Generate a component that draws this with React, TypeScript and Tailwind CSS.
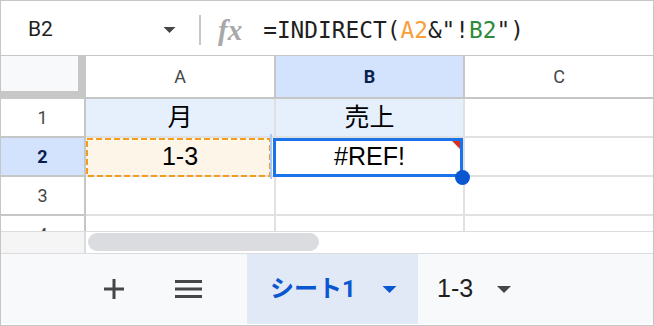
import type { ReactNode } from "react";

const cols = [
  { key: "A", width: "w-[190px]", active: false },
  { key: "B", width: "w-[189px]", active: true },
  { key: "C", width: "flex-1", active: false },
];

const rows: { n: number; cells: ReactNode[]; tint: string[] }[] = [
  { n: 1, cells: ["月", "売上", ""], tint: ["bg-[#e6f0fd]", "bg-[#e6f0fd]", "bg-white"] },
  { n: 2, cells: ["1-3", "#REF!", ""], tint: ["bg-[#fdf5e8]", "bg-white", "bg-white"] },
  { n: 3, cells: ["", "", ""], tint: ["bg-white", "bg-white", "bg-white"] },
  { n: 4, cells: ["", "", ""], tint: ["bg-white", "bg-white", "bg-white"] },
];

function Caret({ className }: { className: string }) {
  return (
    <svg viewBox="0 0 14 7" className={className}>
      <path d="M0 0h14L7 7z" fill="currentColor" />
    </svg>
  );
}

function FormulaBar() {
  return (
    <div className="flex h-[55px] items-center border-b border-[#c4c7c5] pt-[4px] font-['Roboto',sans-serif]">
      <div className="flex w-[198px] items-center justify-between pl-[27px] pr-[23px]">
        <span className="text-[21px] text-[#1f1f1f]">B2</span>
        <Caret className="h-[6px] w-[13px] text-[#444746]" />
      </div>
      <div className="h-[30px] w-[2px] bg-[#c4c7c5]" />
      <span className="ml-[17px] font-['Liberation_Serif',serif] text-[29px] font-bold italic leading-none text-[#a8a8a8]">
        fx
      </span>
      <span className="ml-[21px] font-['DejaVu_Sans_Mono',monospace] text-[22.8px] text-[#1f1f1f]">
        =INDIRECT(<span className="text-[#f5a03a]">A2</span>&amp;"!<span className="text-[#2d8a3a]">B2</span>")
      </span>
    </div>
  );
}

function ColumnHeaders() {
  return (
    <div className="flex h-[43px]">
      <div className="w-[85px] border-r-[8px] border-b-[8px] border-[#c7c7c7] bg-[#f8f9fa]" />
      {cols.map((c, i) => (
        <div
          key={c.key}
          className={`${c.width} flex items-center justify-center border-b-2 border-[#c4c7c5] text-[18px] ${
            i < cols.length - 1 ? "border-r-2" : ""
          } ${c.active ? "bg-[#d3e3fd] font-bold text-[#0a1f4d]" : "bg-white text-[#444746]"}`}
        >
          {c.key}
        </div>
      ))}
    </div>
  );
}

function Rows() {
  return (
    <div className="relative h-[132px] overflow-hidden">
      {rows.map((r) => (
        <div key={r.n} className="flex h-[39px]">
          <div
            className={`flex w-[85px] items-center justify-center border-r-2 border-b-2 border-[#c4c7c5] text-[18px] ${
              r.n === 2 ? "bg-[#d3e3fd] font-bold text-[#0a1f4d]" : "bg-white text-[#444746]"
            }`}
          >
            {r.n}
          </div>
          {cols.map((c, i) => (
            <div
              key={c.key}
              className={`${c.width} ${r.tint[i]} flex items-center justify-center border-b-2 border-[#e1e1e1] font-['Liberation_Sans','Noto_Sans_CJK_JP',sans-serif] text-[25px] text-black ${
                i < cols.length - 1 ? "border-r-2" : ""
              }`}
            >
              {r.cells[i]}
            </div>
          ))}
        </div>
      ))}

      {/* copy reference highlight on A2 */}
      <svg className="absolute left-[85px] top-[39px]" width="185" height="39">
        <rect x="1" y="1" width="183" height="37" fill="none" stroke="#f39c1e" strokeWidth="2" strokeDasharray="6 3" />
      </svg>
      <div className="absolute left-[269px] top-[35px] h-[45px] w-[2px] bg-[#a8c7fa]" />

      {/* selection on B2 */}
      <div className="absolute left-[272px] top-[39px] h-[39px] w-[190px] border-[3px] border-[#1a73e8]">
        <svg className="absolute right-0 top-0" width="8" height="8">
          <path d="M0 0h8v8z" fill="#d93025" />
        </svg>
      </div>
      <div className="absolute left-[454px] top-[71px] h-[15px] w-[15px] rounded-full bg-[#0b57d0]" />
    </div>
  );
}

function ScrollRow() {
  return (
    <div className="flex h-[23px] border-y border-[#dadce0]">
      <div className="w-[85px] border-r-2 border-[#dadce0] bg-[#f5f5f5]" />
      <div className="flex-1 bg-white py-[1px] pl-[2px]">
        <div className="h-[18px] w-[231px] rounded-full bg-[#dadce0]" />
      </div>
    </div>
  );
}

function SheetTabs() {
  return (
    <div className="flex h-[70px] items-stretch bg-[#f8f9fa] font-['Roboto','Noto_Sans_CJK_JP',sans-serif]">
      <div className="flex w-[246px] items-center pl-[103px]">
        <svg width="20" height="20" viewBox="0 0 20 20" className="text-[#444746]">
          <path d="M8.5 0h3v20h-3zM0 8.5h20v3H0z" fill="currentColor" />
        </svg>
        <svg width="27" height="18" viewBox="0 0 27 18" className="ml-[51px] text-[#444746]">
          <path d="M0 0h27v3H0zM0 7.5h27v3H0zM0 15h27v3H0z" fill="currentColor" />
        </svg>
      </div>
      <div className="flex w-[171px] items-center bg-[#e1e9f7] pl-[23px]">
        <span className="text-[24px] font-bold text-[#0b57d0]">シート1</span>
        <Caret className="ml-[26px] h-[7px] w-[15px] text-[#0b57d0]" />
      </div>
      <div className="flex items-center pl-[19px]">
        <span className="font-['Liberation_Sans',sans-serif] text-[25px] text-[#1f1f1f]">1-3</span>
        <Caret className="ml-[23px] h-[7px] w-[16px] text-[#444746]" />
      </div>
    </div>
  );
}

export default function App() {
  return (
    <div className="flex h-[326px] w-[654px] flex-col overflow-hidden border border-[#c4c7c5] bg-white font-['Roboto',sans-serif]">
      <FormulaBar />
      <ColumnHeaders />
      <Rows />
      <ScrollRow />
      <SheetTabs />
    </div>
  );
}
